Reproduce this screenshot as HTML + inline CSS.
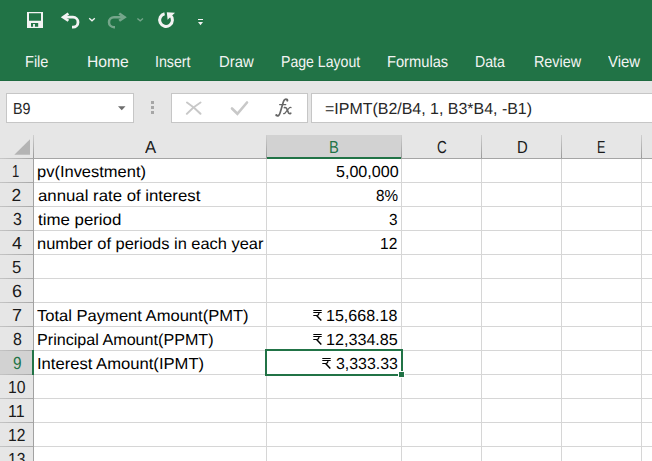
<!DOCTYPE html>
<html><head><meta charset="utf-8">
<style>
*{margin:0;padding:0;box-sizing:border-box}
html,body{width:652px;height:461px;overflow:hidden;background:#e6e6e6;font-family:"Liberation Sans",sans-serif;position:relative}
.a{position:absolute}
.t{position:absolute;white-space:pre;line-height:20px;height:20px;transform-origin:0 15px;text-rendering:geometricPrecision}
.nb{background:#fff;border:1px solid #c6c6c6}
.gh{background:#d6d6d6}
</style></head><body>
<div class="a" style="left:0;top:0;width:652px;height:80px;background:#217346"></div>
<div class="a" style="left:0;top:80px;width:652px;height:1px;background:#1e6a40"></div>

<svg class="a" style="left:0;top:0" width="220" height="40" viewBox="0 0 220 40">
  <path fill="#f3f3f3" fill-rule="evenodd" d="M27 12H43V28H27Z M29 13.3H41V20.8H29Z M31 23.1H38.2V26.8H34.9V24.1H33.1V26.8H31Z"/>
  <path fill="none" stroke="#f3f3f3" stroke-width="2.8" d="M64 17.2H73A5 5 0 0 1 73 27.2H72"/>
  <path fill="#f3f3f3" d="M60.8 17.2L67.6 12.6L69.2 14.6L65.3 17.2L69.2 19.8L67.6 21.8Z"/>
  <path fill="none" stroke="#f3f3f3" stroke-width="1.3" d="M89.2 18.2L92 20.8L94.8 18.2"/>
  <g opacity="0.4">
  <path fill="none" stroke="#f3f3f3" stroke-width="2.5" d="M123 17.2H114A5 5 0 0 0 114 27.2H115"/>
  <path fill="#f3f3f3" d="M126.8 17.2L120 12.6L118.4 14.6L122.3 17.2L118.4 19.8L120 21.8Z"/>
  <path fill="none" stroke="#f3f3f3" stroke-width="1.3" d="M137.4 18.4L140.2 20.8L143 18.4"/>
  </g>
  <path fill="none" stroke="#f3f3f3" stroke-width="3" d="M164.6 13.8A6.4 6.4 0 1 0 170.2 15.2"/>
  <path fill="#f3f3f3" d="M166.8 12.2L175 12.8L167.6 19.8Z"/>
  <rect x="198" y="19" width="5" height="1" fill="#f3f3f3"/>
  <path fill="#f3f3f3" d="M198 22H203L200.5 25.2Z"/>
</svg>

<span class="t" style="left:24.7px;top:53px;font-size:16px;transform:scaleX(0.9094);color:#f3f3f3;">File</span>
<span class="t" style="left:87.3px;top:53px;font-size:16px;transform:scaleX(0.9782);color:#f3f3f3;">Home</span>
<span class="t" style="left:155.2px;top:53px;font-size:16px;transform:scaleX(0.8876);color:#f3f3f3;">Insert</span>
<span class="t" style="left:218.8px;top:53px;font-size:16px;transform:scaleX(0.9279);color:#f3f3f3;">Draw</span>
<span class="t" style="left:280.6px;top:53px;font-size:16px;transform:scaleX(0.8809);color:#f3f3f3;">Page Layout</span>
<span class="t" style="left:387.3px;top:53px;font-size:16px;transform:scaleX(0.9169);color:#f3f3f3;">Formulas</span>
<span class="t" style="left:475.3px;top:53px;font-size:16px;transform:scaleX(0.8851);color:#f3f3f3;">Data</span>
<span class="t" style="left:533.7px;top:53px;font-size:16px;transform:scaleX(0.8962);color:#f3f3f3;">Review</span>
<span class="t" style="left:607.9px;top:53px;font-size:16px;transform:scaleX(0.9333);color:#f3f3f3;">View</span>
<div class="a nb" style="left:6px;top:93px;width:128px;height:30px"></div>
<div class="a nb" style="left:171px;top:93px;width:137px;height:30px"></div>
<div class="a nb" style="left:311px;top:93px;width:360px;height:30px"></div>
<svg class="a" style="left:0;top:80px" width="320" height="50" viewBox="0 80 320 50">
  <path fill="#6d6d6d" d="M118 106.3H125.5L121.75 110.2Z"/>
  <rect x="151" y="101" width="3" height="3" fill="#a6a6a6"/>
  <rect x="151" y="106" width="3" height="3" fill="#a6a6a6"/>
  <rect x="151" y="111" width="3" height="3" fill="#a6a6a6"/>
  <path fill="none" stroke="#c8c8c8" stroke-width="2" stroke-linecap="round" d="M187 102.5Q194 107 200.5 113.8M200.5 102.5Q193 107 186.8 113.8"/>
  <path fill="none" stroke="#c8c8c8" stroke-width="2.6" stroke-linecap="round" d="M232 108.5L237.4 113.8L247 102.5"/>
</svg>
<svg class="a" style="left:268px;top:94px" width="30" height="28" viewBox="268 94 30 28">
  <g fill="none" stroke="#666" stroke-linecap="round">
  <path stroke-width="1.7" d="M276.4 115.6Q278.8 117 280.2 112.5L283.3 102Q284.6 98.2 287.3 99.6"/>
  <circle cx="276.4" cy="115" r="1.1" fill="#666" stroke="none"/>
  <circle cx="287.3" cy="100.6" r="1.1" fill="#666" stroke="none"/>
  <path stroke-width="1.2" d="M279.6 104.6H285.8"/>
  <path stroke-width="1.6" d="M284.4 107.6Q286 107 287 109.2L288.4 112.6Q289.2 114.2 290.8 113.2"/>
  <path stroke-width="1.2" d="M291 107.6Q290.2 107 288.6 108.6L285.6 112.4Q284.6 114 283.6 113.6"/>
  </g>
</svg>

<span class="t" style="left:13.2px;top:100px;font-size:16px;transform:scaleX(0.8953);color:#262626;">B9</span>
<span class="t" style="left:324.5px;top:100px;font-size:16px;transform:scaleX(0.9971);color:#262626;">=IPMT(B2/B4, 1, B3*B4, -B1)</span>
<div class="a" style="left:267px;top:135px;width:134px;height:22px;background:#d2d2d2"></div>
<svg class="a" style="left:0;top:135px" width="34" height="23" viewBox="0 135 34 23">
  <path fill="#b4b4b4" d="M30 139.3V154.7H14.3Z"/>
</svg>
<div class="a" style="left:0;top:158px;width:652px;height:1px;background:#a5a5a5"></div><div class="a" style="left:0;top:158px;width:33px;height:1px;background:linear-gradient(90deg,#c8c8c8,#a5a5a5)"></div>
<div class="a" style="left:267px;top:157px;width:134px;height:2px;background:#217346"></div>

<div class="a" style="left:33px;top:135px;width:1px;height:23px;background:linear-gradient(#cfcfcf,#9a9a9a)"></div>
<div class="a" style="left:266px;top:135px;width:1px;height:23px;background:linear-gradient(#cfcfcf,#9a9a9a)"></div>
<div class="a" style="left:401px;top:135px;width:1px;height:23px;background:linear-gradient(#cfcfcf,#9a9a9a)"></div>
<div class="a" style="left:481px;top:135px;width:1px;height:23px;background:linear-gradient(#cfcfcf,#9a9a9a)"></div>
<div class="a" style="left:561px;top:135px;width:1px;height:23px;background:linear-gradient(#cfcfcf,#9a9a9a)"></div>
<div class="a" style="left:641px;top:135px;width:1px;height:23px;background:linear-gradient(#cfcfcf,#9a9a9a)"></div>
<span class="t" style="left:144.8px;top:137px;font-size:17.4px;transform:scaleX(0.9601);color:#1a1a1a;">A</span>
<span class="t" style="left:436.8px;top:137px;font-size:17.4px;transform:scaleX(0.7794);color:#1a1a1a;">C</span>
<span class="t" style="left:516.5px;top:137px;font-size:17.4px;transform:scaleX(0.8556);color:#1a1a1a;">D</span>
<span class="t" style="left:597.2px;top:137px;font-size:17.4px;transform:scaleX(0.7236);color:#1a1a1a;">E</span>
<span class="t" style="left:329.25px;top:137px;font-size:17.4px;transform:scaleX(0.8458);color:#217346;">B</span>
<div class="a" style="left:34px;top:159px;width:618px;height:302px;background:#fff"></div>
<div class="a" style="left:0;top:182px;width:33px;height:1px;background:linear-gradient(90deg,#c4c4c4,#a8a8a8)"></div>
<div class="a gh" style="left:34px;top:182px;width:618px;height:1px"></div>
<div class="a" style="left:0;top:206px;width:33px;height:1px;background:linear-gradient(90deg,#c4c4c4,#a8a8a8)"></div>
<div class="a gh" style="left:34px;top:206px;width:618px;height:1px"></div>
<div class="a" style="left:0;top:230px;width:33px;height:1px;background:linear-gradient(90deg,#c4c4c4,#a8a8a8)"></div>
<div class="a gh" style="left:34px;top:230px;width:618px;height:1px"></div>
<div class="a" style="left:0;top:254px;width:33px;height:1px;background:linear-gradient(90deg,#c4c4c4,#a8a8a8)"></div>
<div class="a gh" style="left:34px;top:254px;width:618px;height:1px"></div>
<div class="a" style="left:0;top:278px;width:33px;height:1px;background:linear-gradient(90deg,#c4c4c4,#a8a8a8)"></div>
<div class="a gh" style="left:34px;top:278px;width:618px;height:1px"></div>
<div class="a" style="left:0;top:302px;width:33px;height:1px;background:linear-gradient(90deg,#c4c4c4,#a8a8a8)"></div>
<div class="a gh" style="left:34px;top:302px;width:618px;height:1px"></div>
<div class="a" style="left:0;top:326px;width:33px;height:1px;background:linear-gradient(90deg,#c4c4c4,#a8a8a8)"></div>
<div class="a gh" style="left:34px;top:326px;width:618px;height:1px"></div>
<div class="a" style="left:0;top:350px;width:33px;height:1px;background:linear-gradient(90deg,#c4c4c4,#a8a8a8)"></div>
<div class="a gh" style="left:34px;top:350px;width:618px;height:1px"></div>
<div class="a" style="left:0;top:374px;width:33px;height:1px;background:linear-gradient(90deg,#c4c4c4,#a8a8a8)"></div>
<div class="a gh" style="left:34px;top:374px;width:618px;height:1px"></div>
<div class="a" style="left:0;top:398px;width:33px;height:1px;background:linear-gradient(90deg,#c4c4c4,#a8a8a8)"></div>
<div class="a gh" style="left:34px;top:398px;width:618px;height:1px"></div>
<div class="a" style="left:0;top:422px;width:33px;height:1px;background:linear-gradient(90deg,#c4c4c4,#a8a8a8)"></div>
<div class="a gh" style="left:34px;top:422px;width:618px;height:1px"></div>
<div class="a" style="left:0;top:446px;width:33px;height:1px;background:linear-gradient(90deg,#c4c4c4,#a8a8a8)"></div>
<div class="a gh" style="left:34px;top:446px;width:618px;height:1px"></div>
<div class="a gh" style="left:266px;top:159px;width:1px;height:302px"></div>
<div class="a gh" style="left:401px;top:159px;width:1px;height:302px"></div>
<div class="a gh" style="left:481px;top:159px;width:1px;height:302px"></div>
<div class="a gh" style="left:561px;top:159px;width:1px;height:302px"></div>
<div class="a gh" style="left:641px;top:159px;width:1px;height:302px"></div>
<div class="a" style="left:33px;top:159px;width:1px;height:302px;background:#a2a2a2"></div>
<div class="a" style="left:0;top:351px;width:32px;height:23px;background:#d2d2d2"></div>
<div class="a" style="left:32px;top:350px;width:2px;height:25px;background:#217346"></div>
<span class="t" style="left:12.1px;top:161px;font-size:17.4px;transform:scaleX(0.75);color:#1a1a1a;">1</span>
<span class="t" style="left:11.5px;top:185px;font-size:17.4px;transform:scaleX(1.0);color:#1a1a1a;">2</span>
<span class="t" style="left:12.5px;top:209px;font-size:17.4px;transform:scaleX(0.9147);color:#1a1a1a;">3</span>
<span class="t" style="left:11.5px;top:233px;font-size:17.4px;transform:scaleX(1.0254);color:#1a1a1a;">4</span>
<span class="t" style="left:11.5px;top:257px;font-size:17.4px;transform:scaleX(0.963);color:#1a1a1a;">5</span>
<span class="t" style="left:11.5px;top:281px;font-size:17.4px;transform:scaleX(1.029);color:#1a1a1a;">6</span>
<span class="t" style="left:11.5px;top:305px;font-size:17.4px;transform:scaleX(1.029);color:#1a1a1a;">7</span>
<span class="t" style="left:12.5px;top:329px;font-size:17.4px;transform:scaleX(0.9147);color:#1a1a1a;">8</span>
<span class="t" style="left:12.7px;top:353px;font-size:17.4px;transform:scaleX(0.8824);color:#217346;">9</span>
<span class="t" style="left:8.4px;top:377px;font-size:17.4px;transform:scaleX(0.9057);color:#1a1a1a;">10</span>
<span class="t" style="left:8.4px;top:401px;font-size:17.4px;transform:scaleX(0.9181);color:#1a1a1a;">11</span>
<span class="t" style="left:8.1px;top:425px;font-size:17.4px;transform:scaleX(0.9009);color:#1a1a1a;">12</span>
<span class="t" style="left:8.1px;top:449px;font-size:17.4px;transform:scaleX(0.9009);color:#1a1a1a;">13</span>
<span class="t" style="left:36.9px;top:163px;font-size:16px;transform:scaleX(1.0298);color:#000;">pv(Investment)</span>
<span class="t" style="left:37.5px;top:187px;font-size:16px;transform:scaleX(1.049);color:#000;">annual rate of interest</span>
<span class="t" style="left:37.5px;top:211px;font-size:16px;transform:scaleX(1.0532);color:#000;">time period</span>
<span class="t" style="left:36.5px;top:235px;font-size:16px;transform:scaleX(1.0268);color:#000;">number of periods in each year</span>
<span class="t" style="left:36.9px;top:307px;font-size:16px;transform:scaleX(1.0348);color:#000;">Total Payment Amount(PMT)</span>
<span class="t" style="left:36.9px;top:331px;font-size:16px;transform:scaleX(1.0081);color:#000;">Principal Amount(PPMT)</span>
<span class="t" style="left:36.9px;top:355px;font-size:16px;transform:scaleX(1.0384);color:#000;">Interest Amount(IPMT)</span>
<span class="t" style="left:335.5px;top:163px;font-size:16px;transform:scaleX(1.0049);color:#000;">5,00,000</span>
<span class="t" style="left:376.0px;top:187px;font-size:16px;transform:scaleX(0.9527);color:#000;">8%</span>
<span class="t" style="left:389.0px;top:211px;font-size:16px;transform:scaleX(0.9572);color:#000;">3</span>
<span class="t" style="left:379.7px;top:235px;font-size:16px;transform:scaleX(0.9715);color:#000;">12</span>
<span class="t" style="left:325.8px;top:307px;font-size:16px;transform:scaleX(1.0029);color:#000;">15,668.18</span>
<span class="t" style="left:325.8px;top:331px;font-size:16px;transform:scaleX(1.0086);color:#000;">12,334.85</span>
<span class="t" style="left:335.5px;top:355px;font-size:16px;transform:scaleX(0.992);color:#000;">3,333.33</span>
<svg class="a" style="left:312px;top:309px" width="12" height="13" viewBox="312 309 12 13"><path fill="none" stroke="#000" stroke-width="1.1" d="M313.3 310.5H321.7M313.3 312.5H321.7M313.3 315.5H316.8C318.5 315.5 319 314 319 312.5"/><path fill="none" stroke="#000" stroke-width="1.5" d="M316.8 315.7L321.3 320.5"/></svg>
<svg class="a" style="left:312px;top:333px" width="12" height="13" viewBox="312 333 12 13"><path fill="none" stroke="#000" stroke-width="1.1" d="M313.3 334.5H321.7M313.3 336.5H321.7M313.3 339.5H316.8C318.5 339.5 319 338 319 336.5"/><path fill="none" stroke="#000" stroke-width="1.5" d="M316.8 339.7L321.3 344.5"/></svg>
<svg class="a" style="left:321px;top:357px" width="12" height="13" viewBox="321 357 12 13"><path fill="none" stroke="#000" stroke-width="1.1" d="M322.3 358.5H330.7M322.3 360.5H330.7M322.3 363.5H325.8C327.5 363.5 328 362 328 360.5"/><path fill="none" stroke="#000" stroke-width="1.5" d="M325.8 363.7L330.3 368.5"/></svg>
<div class="a" style="left:265px;top:349px;width:138px;height:27px;border:2px solid #217346"></div>
<div class="a" style="left:398px;top:371px;width:7px;height:7px;background:#fff"></div>
<div class="a" style="left:399px;top:372px;width:5px;height:5px;background:#217346"></div>
</body></html>
